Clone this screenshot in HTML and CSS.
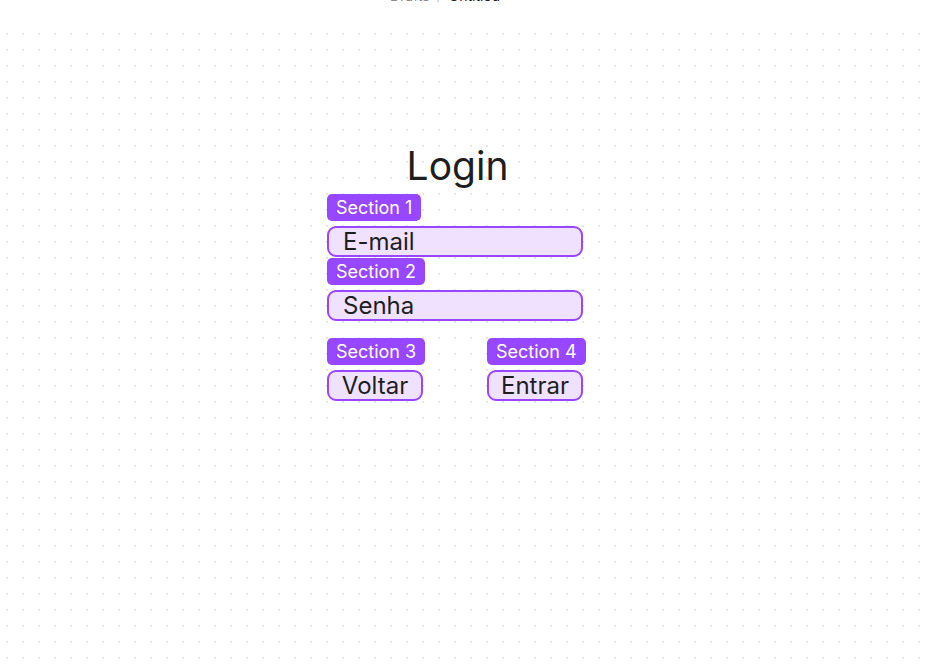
FILE: index.html
```html
<!DOCTYPE html>
<html lang="pt">
<head>
<meta charset="utf-8">
<title>Login</title>
<link rel="stylesheet" href="styles.css">
</head>
<body>
<header class="topbar">
  <div class="crumbs"><span class="crumb-muted">Drafts</span><span class="crumb-sep">/</span><span class="crumb-current">Untitled</span></div>
</header>
<main class="canvas">
  <section class="frame">
    <h1 class="title">Login</h1>
    <div class="field">
      <span class="badge">Section 1</span>
      <div class="box wide">E-mail</div>
    </div>
    <div class="field">
      <span class="badge">Section 2</span>
      <div class="box wide">Senha</div>
    </div>
    <div class="actions">
      <div class="action">
        <span class="badge">Section 3</span>
        <div class="box btn">Voltar</div>
      </div>
      <div class="action">
        <span class="badge">Section 4</span>
        <div class="box btn">Entrar</div>
      </div>
    </div>
  </section>
</main>
</body>
</html>
```

FILE: styles.css
```css
html, body {
  margin: 0;
  padding: 0;
}
body {
  width: 932px;
  height: 670px;
  overflow: hidden;
  font-family: "Inter", "Noto Sans", sans-serif;
  color: #1e1e1e;
  background-color: #ffffff;
  background-image: radial-gradient(circle at 1px 1px, #e6e6e6 0.85px, transparent 1.05px);
  background-size: 16px 16px;
  background-position: 6px 1px;
}
.topbar {
  height: 26px;
  background: #ffffff;
  display: flex;
  justify-content: center;
  overflow: hidden;
}
.crumbs {
  margin-top: -12px;
  font-size: 14px;
  line-height: 16px;
  display: flex;
  gap: 7px;
  padding-right: 42px;
}
.crumb-muted { color: #8a8a8a; }
.crumb-sep { color: #c4c4c4; }
.crumb-current { color: #1e1e1e; }
.canvas {
  padding-top: 116px;
  padding-left: 327px;
}
.frame {
  width: 256px;
  display: flex;
  flex-direction: column;
}
.title {
  margin: 0 0 4px 0;
  font-weight: 400;
  font-size: 39px;
  line-height: 48px;
  text-align: center;
  padding-left: 5px;
  color: #1e1e1e;
}
.field {
  display: flex;
  flex-direction: column;
  align-items: flex-start;
  gap: 5px;
  margin-bottom: 1px;
}
.badge {
  display: inline-flex;
  align-items: center;
  flex-shrink: 0;
  white-space: nowrap;
  height: 27px;
  padding: 0 9px;
  box-sizing: border-box;
  background: #9747ff;
  color: #ffffff;
  border-radius: 5px;
  font-size: 18px;
  line-height: 27px;
}
.box {
  box-sizing: border-box;
  height: 31px;
  border: 2px solid #9747ff;
  border-radius: 9px;
  background: #f0e2ff;
  font-size: 24px;
  line-height: 27px;
  color: #1e1e1e;
  white-space: nowrap;
}
.wide {
  width: 256px;
  padding-left: 14px;
}
.actions {
  display: grid;
  grid-template-columns: 160px 96px;
  margin-top: 16px;
}
.action {
  display: flex;
  flex-direction: column;
  align-items: flex-start;
  gap: 5px;
}
.btn {
  width: 96px;
  text-align: center;
}
```
